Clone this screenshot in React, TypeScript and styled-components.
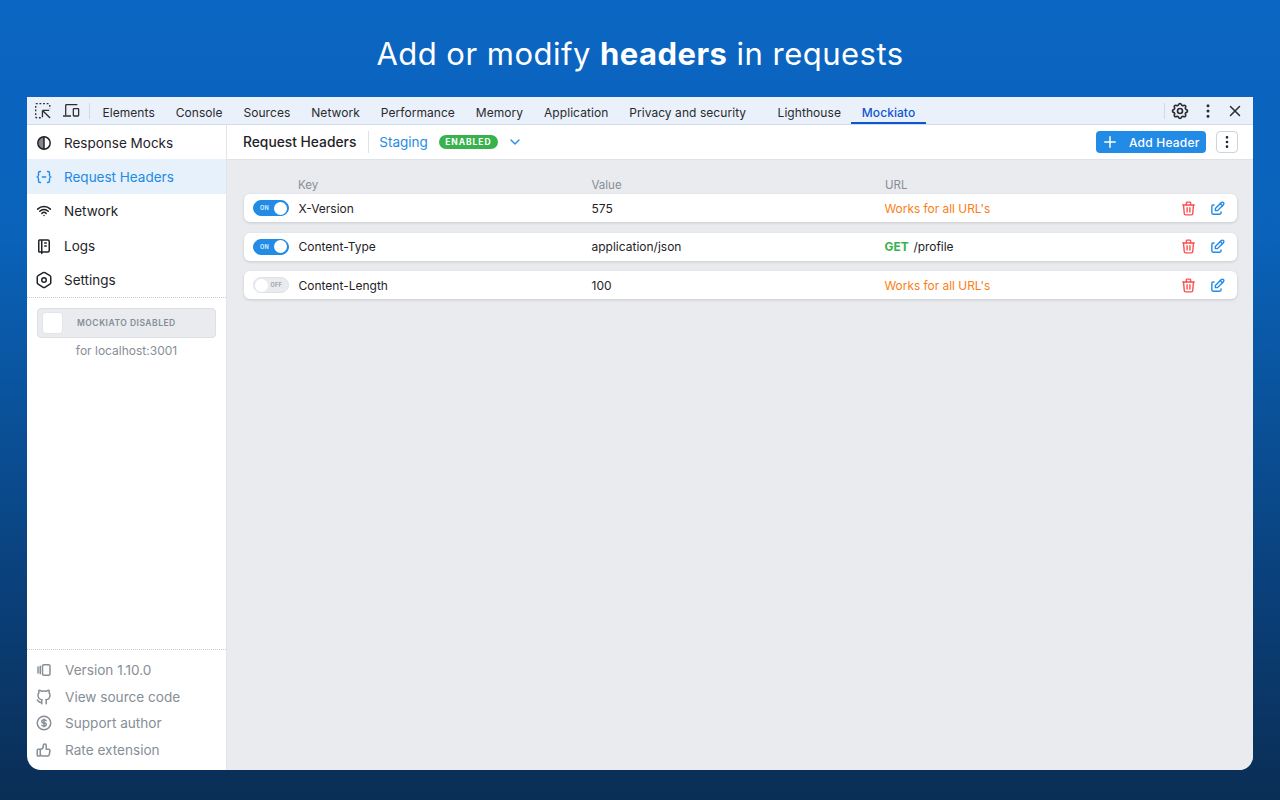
import styled, { createGlobalStyle } from "styled-components";
import {
  TbBrandGithub,
  TbChevronDown,
  TbCoin,
  TbDotsVertical,
  TbEdit,
  TbNotebook,
  TbPlus,
  TbSettings,
  TbSettings2,
  TbThumbUp,
  TbTrash,
  TbVersions,
  TbWifi,
  TbX,
} from "react-icons/tb";

const GlobalStyle = createGlobalStyle`
  html, body {
    margin: 0;
    padding: 0;
  }
  body {
    font-family: Inter, "Liberation Sans", sans-serif;
    color: #1f2328;
  }
  * {
    box-sizing: border-box;
  }
`;

const Page = styled.div`
  width: 1280px;
  height: 800px;
  overflow: hidden;
  background: linear-gradient(180deg, #0b66c3 0%, #0a62b9 30%, #0a3f78 75%, #0a2e55 100%);
  display: flex;
  flex-direction: column;
  align-items: center;
`;

const Title = styled.h1`
  height: 97px;
  margin: 0;
  padding-top: 34px;
  font-size: 31px;
  line-height: 40px;
  font-weight: 400;
  letter-spacing: 0.48px;
  color: #fff;
  b {
    font-weight: 700;
  }
`;

const Window = styled.div`
  width: 1226px;
  height: 673px;
  background: #fff;
  border-radius: 0 0 14px 14px;
  overflow: hidden;
  display: flex;
  flex-direction: column;
`;

const DevTools = styled.div`
  height: 28px;
  flex-shrink: 0;
  background: #ebf1fb;
  border-bottom: 1px solid #cfdcf0;
  display: flex;
  align-items: center;
  padding-left: 2px;
  font-size: 12px;
  letter-spacing: 0.06px;
  color: #282a2d;
`;

const ToolIcon = styled.span`
  width: 28px;
  height: 27px;
  display: flex;
  align-items: center;
  justify-content: center;
  flex-shrink: 0;
  color: #2b2d30;
`;

const RightIcon = styled(ToolIcon)`
  width: 27.5px;
`;

const ToolDivider = styled.span`
  width: 1px;
  height: 16px;
  background: #cfd9e8;
  margin: 0 2px 0 4px;
`;

const Tab = styled.span<{ $active?: boolean; $gap?: number }>`
  height: 27px;
  line-height: 27px;
  padding: 2px 10.45px 0;
  margin-right: ${(p) => p.$gap ?? 0}px;
  white-space: nowrap;
  color: ${(p) => (p.$active ? "#0b57d0" : "inherit")};
  font-weight: ${(p) => (p.$active ? 500 : 400)};
  border-bottom: ${(p) => (p.$active ? "2px solid #0b57d0" : "none")};
`;

const ToolRight = styled.div`
  margin-left: auto;
  display: flex;
  align-items: center;
  padding-right: 4px;
`;

const Body = styled.div`
  flex: 1;
  display: flex;
  min-height: 0;
`;

const Sidebar = styled.aside`
  width: 200px;
  flex-shrink: 0;
  border-right: 1px solid #e3e5e9;
  display: flex;
  flex-direction: column;
`;

const NavItem = styled.div<{ $active?: boolean }>`
  height: 34.4px;
  display: flex;
  align-items: center;
  gap: 11px;
  padding: 1px 0 0 8px;
  font-size: 13.5px;
  color: ${(p) => (p.$active ? "#228be6" : "#1f2328")};
  background: ${(p) => (p.$active ? "#e7f1fc" : "transparent")};
`;

const NavList = styled.nav`
  border-bottom: 1px dotted #c9ccd1;
`;

const Switcher = styled.div`
  margin: 10px 10px 0;
  height: 30px;
  background: #e9ebef;
  border: 1px solid #dcdfe4;
  border-radius: 4px;
  display: flex;
  align-items: center;
  padding-left: 4px;
`;

const SwitcherKnob = styled.span`
  width: 21px;
  height: 22px;
  border-radius: 4px;
  background: #fff;
  border: 1px solid #e2e4e8;
  flex-shrink: 0;
`;

const SwitcherLabel = styled.span`
  margin-left: 14px;
  font-size: 8.5px;
  font-weight: 600;
  letter-spacing: 0.5px;
  color: #858e96;
`;

const HostNote = styled.div`
  text-align: center;
  font-size: 12px;
  line-height: 14px;
  margin-top: 6px;
  color: #868e96;
`;

const Footer = styled.div`
  margin-top: auto;
  border-top: 1px dotted #c9ccd1;
  padding: 7px 0 7px 8px;
`;

const FooterRow = styled.div`
  height: 26.5px;
  display: flex;
  align-items: center;
  gap: 12px;
  font-size: 13.6px;
  color: #868e96;
`;

const Main = styled.main`
  flex: 1;
  min-width: 0;
  background: #e9ebef;
  display: flex;
  flex-direction: column;
`;

const Header = styled.header`
  height: 35px;
  flex-shrink: 0;
  background: #fff;
  border-bottom: 1px solid #dee2e6;
  display: flex;
  align-items: center;
  padding: 0 15px 0 16px;
`;

const HeaderTitle = styled.span`
  font-size: 13.8px;
  font-weight: 500;
  padding-right: 12px;
  margin-right: 10px;
  line-height: 22px;
  border-right: 1px solid #dee2e6;
`;

const Env = styled.span`
  font-size: 13.5px;
  color: #228be6;
`;

const Badge = styled.span`
  margin-left: 11px;
  width: 59px;
  height: 14px;
  border-radius: 7px;
  background: #37b24d;
  color: #fff;
  font-size: 8.5px;
  font-weight: 700;
  letter-spacing: 0.95px;
  display: flex;
  align-items: center;
  justify-content: center;
`;

const Chevron = styled.span`
  display: flex;
  margin-left: 9px;
  color: #228be6;
`;

const AddButton = styled.button`
  margin-left: auto;
  width: 110px;
  height: 22px;
  border: 0;
  border-radius: 4px;
  background: #228be6;
  color: #fff;
  font-family: inherit;
  font-size: 12px;
  font-weight: 500;
  letter-spacing: 0.2px;
  display: flex;
  align-items: center;
  padding: 0 0 0 5px;
  gap: 10px;
`;

const MenuButton = styled.button`
  margin-left: 10px;
  width: 22px;
  height: 22px;
  padding: 0;
  background: #fff;
  border: 1px solid #ced4da;
  border-radius: 4px;
  color: #212529;
  display: flex;
  align-items: center;
  justify-content: center;
`;

const Table = styled.div`
  padding: 17px 16px 0 17px;
`;

const Columns = styled.div`
  display: grid;
  grid-template-columns: 293.5px 293.5px 1fr;
  padding-left: 54px;
  height: 17px;
  font-size: 11.5px;
  line-height: 16px;
  color: #868e96;
`;

const Row = styled.div`
  height: 28px;
  margin-bottom: 10.5px;
  background: #fff;
  border-radius: 6px;
  box-shadow: 0 1px 3px rgba(0, 0, 0, 0.14);
  display: grid;
  grid-template-columns: 54.5px 293px 293.5px 1fr 70px;
  align-items: center;
  font-size: 12px;
`;

const Toggle = styled.span<{ $on?: boolean }>`
  margin-left: 9px;
  width: 36px;
  height: 16px;
  border-radius: 8px;
  background: ${(p) => (p.$on ? "#228be6" : "#e9ebef")};
  border: 1px solid ${(p) => (p.$on ? "#228be6" : "#dee2e6")};
  display: flex;
  flex-direction: ${(p) => (p.$on ? "row" : "row-reverse")};
  align-items: center;
  justify-content: space-between;
  padding: 0 1px 0 ${(p) => (p.$on ? 6 : 1)}px;
  font-size: 5.5px;
  font-weight: 700;
  letter-spacing: 0.3px;
  color: ${(p) => (p.$on ? "#d6e9fb" : "#a0a6ac")};
  &::after {
    content: "";
    width: 13px;
    height: 13px;
    border-radius: 50%;
    background: #fff;
  }
`;

const ToggleText = styled.span<{ $off?: boolean }>`
  margin-right: ${(p) => (p.$off ? 5 : 0)}px;
`;

const UrlCell = styled.span`
  margin-left: -0.5px;
  font-size: 11.9px;
`;

const AnyUrl = styled(UrlCell)`
  color: #fd7e14;
`;

const Method = styled.b`
  color: #37b24d;
  font-weight: 700;
  margin-right: 1.5px;
`;

const Actions = styled.span`
  display: flex;
  align-items: center;
  gap: 11.5px;
  padding-left: 13px;
`;

const TrashBtn = styled.span`
  display: flex;
  color: #fa5252;
`;

const EditBtn = styled.span`
  display: flex;
  color: #228be6;
`;

function InspectIcon() {
  return (
    <svg width="18" height="18" viewBox="0 0 16 16" fill="none" stroke="currentColor" strokeWidth="1.2">
      <path d="M6 14H2.5a1 1 0 0 1-1-1V2.5a1 1 0 0 1 1-1H13a1 1 0 0 1 1 1V6" strokeDasharray="1.6 1.6" />
      <path d="M7.5 7.5h6M7.5 7.5v6M7.8 7.8l6.5 6.5" />
    </svg>
  );
}

function DeviceIcon() {
  return (
    <svg width="18" height="17" viewBox="0 0 17 16" fill="none" stroke="currentColor" strokeWidth="1.2">
      <path d="M3.5 12.5V3.2a.7.7 0 0 1 .7-.7h10.3" />
      <path d="M1 13.2h7.5" />
      <rect x="10.7" y="6.2" width="5" height="7" rx=".6" />
    </svg>
  );
}

function BracesIcon() {
  return (
    <svg width="18" height="18" viewBox="-1 -1 18 18" fill="none" stroke="currentColor" strokeWidth="1.4" strokeLinecap="round">
      <path d="M4.5 2.5H4a1.5 1.5 0 0 0-1.5 1.5v2.2c0 .8-.5 1.4-1.2 1.8.7.4 1.2 1 1.2 1.8V12A1.5 1.5 0 0 0 4 13.5h.5" />
      <path d="M11.5 2.5h.5A1.5 1.5 0 0 1 13.5 4v2.2c0 .8.5 1.4 1.2 1.8-.7.4-1.2 1-1.2 1.8V12a1.5 1.5 0 0 1-1.5 1.5h-.5" />
      <path d="M6.3 8h3.4" />
    </svg>
  );
}

function HalfCircleIcon() {
  return (
    <svg width="18" height="18" viewBox="0 0 18 18" fill="none" stroke="currentColor" strokeWidth="1.5">
      <path d="M9 2.8a6.2 6.2 0 0 0 0 12.4z" fill="currentColor" fillOpacity=".55" stroke="none" />
      <circle cx="9" cy="9" r="6.2" />
      <path d="M9 2.8v12.4" />
    </svg>
  );
}

const tabs = ["Elements", "Console", "Sources", "Network", "Performance", "Memory", "Application"];

const rows = [
  { key: "X-Version", value: "575", on: true },
  { key: "Content-Type", value: "application/json", on: true, method: "GET", path: "/profile" },
  { key: "Content-Length", value: "100", on: false },
];

export default function App() {
  return (
    <Page>
      <GlobalStyle />
      <Title>
        Add or modify <b>headers</b> in requests
      </Title>
      <Window>
        <DevTools>
          <ToolIcon>
            <InspectIcon />
          </ToolIcon>
          <ToolIcon>
            <DeviceIcon />
          </ToolIcon>
          <ToolDivider />
          {tabs.map((t) => (
            <Tab key={t}>{t}</Tab>
          ))}
          <Tab $gap={10.5}>Privacy and security</Tab>
          <Tab>Lighthouse</Tab>
          <Tab $active>Mockiato</Tab>
          <ToolRight>
            <ToolDivider />
            <RightIcon>
              <TbSettings size={20} />
            </RightIcon>
            <RightIcon>
              <TbDotsVertical size={18} />
            </RightIcon>
            <RightIcon>
              <TbX size={18} />
            </RightIcon>
          </ToolRight>
        </DevTools>
        <Body>
          <Sidebar>
            <NavList>
              <NavItem>
                <HalfCircleIcon />
                Response Mocks
              </NavItem>
              <NavItem $active>
                <BracesIcon />
                Request Headers
              </NavItem>
              <NavItem>
                <TbWifi size={18} />
                Network
              </NavItem>
              <NavItem>
                <TbNotebook size={18} />
                Logs
              </NavItem>
              <NavItem>
                <TbSettings2 size={18} />
                Settings
              </NavItem>
            </NavList>
            <Switcher>
              <SwitcherKnob />
              <SwitcherLabel>MOCKIATO DISABLED</SwitcherLabel>
            </Switcher>
            <HostNote>for localhost:3001</HostNote>
            <Footer>
              <FooterRow>
                <TbVersions size={18} />
                Version 1.10.0
              </FooterRow>
              <FooterRow>
                <TbBrandGithub size={18} />
                View source code
              </FooterRow>
              <FooterRow>
                <TbCoin size={18} />
                Support author
              </FooterRow>
              <FooterRow>
                <TbThumbUp size={18} />
                Rate extension
              </FooterRow>
            </Footer>
          </Sidebar>
          <Main>
            <Header>
              <HeaderTitle>Request Headers</HeaderTitle>
              <Env>Staging</Env>
              <Badge>ENABLED</Badge>
              <Chevron>
                <TbChevronDown size={16} />
              </Chevron>
              <AddButton>
                <TbPlus size={18} />
                Add Header
              </AddButton>
              <MenuButton>
                <TbDotsVertical size={16} />
              </MenuButton>
            </Header>
            <Table>
              <Columns>
                <span>Key</span>
                <span>Value</span>
                <span>URL</span>
              </Columns>
              {rows.map((r) => (
                <Row key={r.key}>
                  <Toggle $on={r.on}>
                    <ToggleText $off={!r.on}>{r.on ? "ON" : "OFF"}</ToggleText>
                  </Toggle>
                  <span>{r.key}</span>
                  <span>{r.value}</span>
                  {r.method ? (
                    <UrlCell>
                      <Method>{r.method}</Method> {r.path}
                    </UrlCell>
                  ) : (
                    <AnyUrl>Works for all URL's</AnyUrl>
                  )}
                  <Actions>
                    <TrashBtn>
                      <TbTrash size={17} />
                    </TrashBtn>
                    <EditBtn>
                      <TbEdit size={17} />
                    </EditBtn>
                  </Actions>
                </Row>
              ))}
            </Table>
          </Main>
        </Body>
      </Window>
    </Page>
  );
}
